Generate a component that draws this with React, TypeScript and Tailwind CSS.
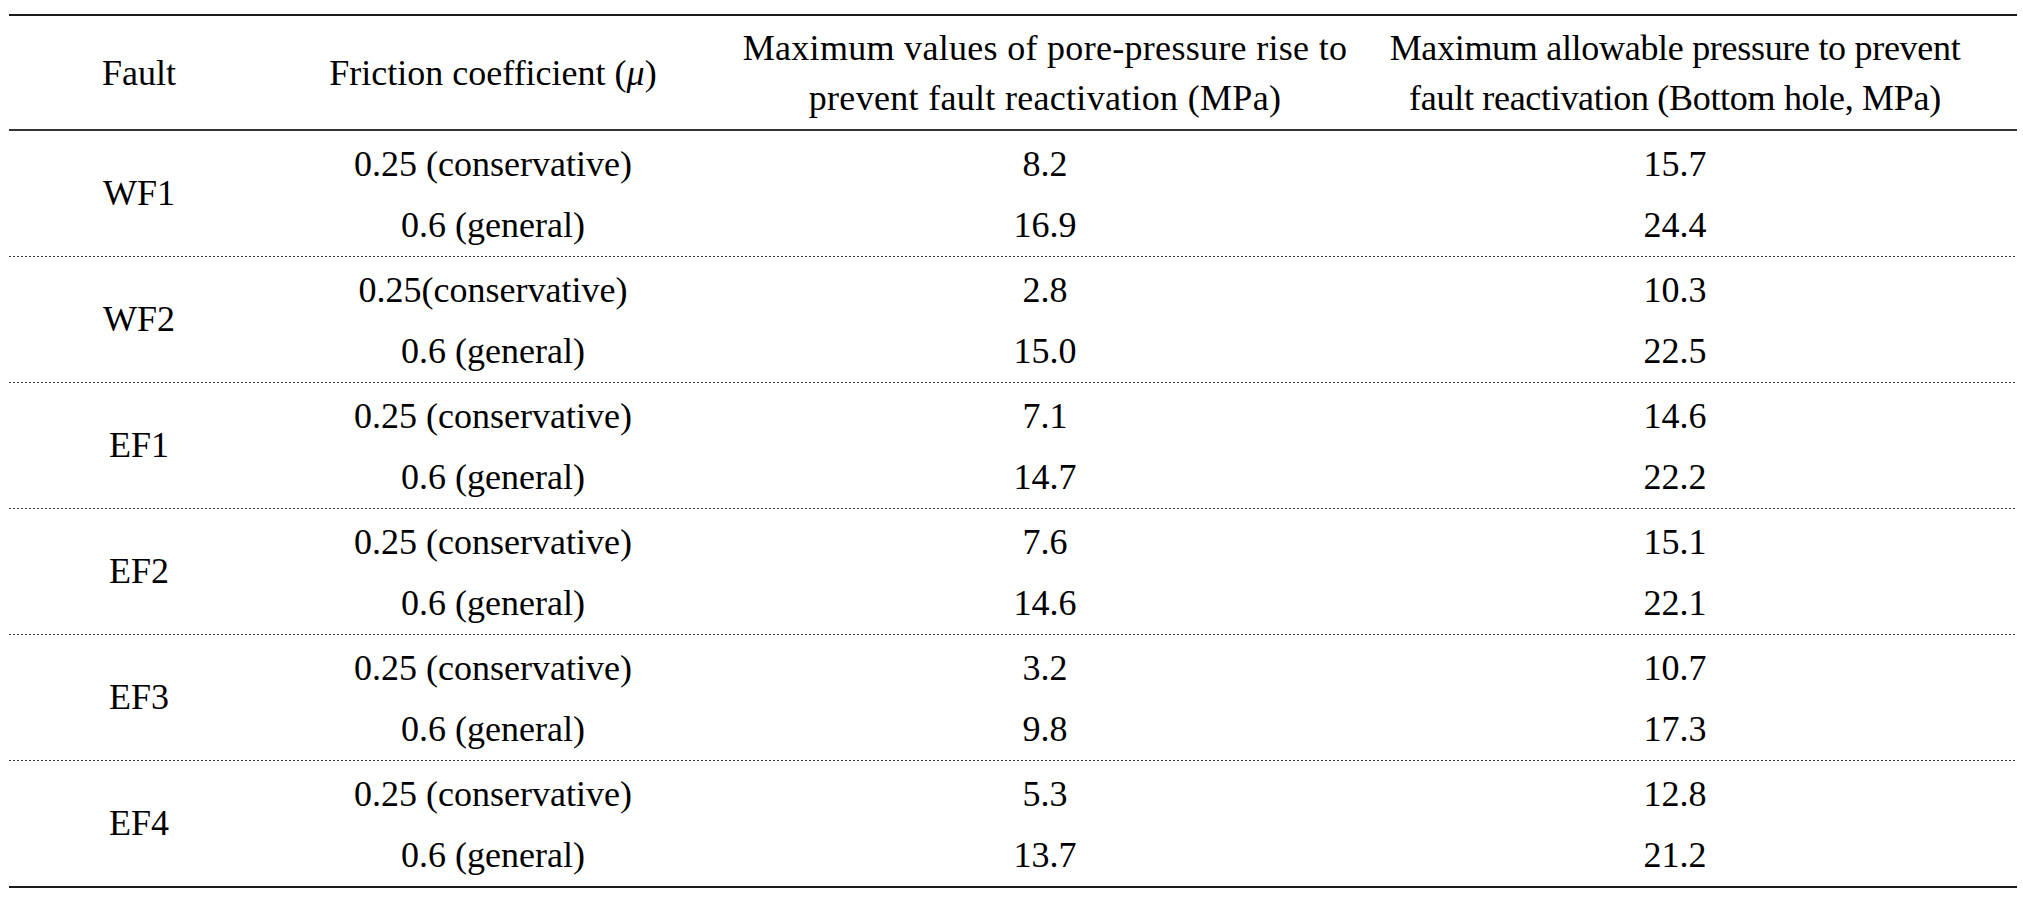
const rows = [
  { fault: 'WF1', low: ['0.25 (conservative)', '8.2', '15.7'], high: ['0.6 (general)', '16.9', '24.4'] },
  { fault: 'WF2', low: ['0.25(conservative)', '2.8', '10.3'], high: ['0.6 (general)', '15.0', '22.5'] },
  { fault: 'EF1', low: ['0.25 (conservative)', '7.1', '14.6'], high: ['0.6 (general)', '14.7', '22.2'] },
  { fault: 'EF2', low: ['0.25 (conservative)', '7.6', '15.1'], high: ['0.6 (general)', '14.6', '22.1'] },
  { fault: 'EF3', low: ['0.25 (conservative)', '3.2', '10.7'], high: ['0.6 (general)', '9.8', '17.3'] },
  { fault: 'EF4', low: ['0.25 (conservative)', '5.3', '12.8'], high: ['0.6 (general)', '13.7', '21.2'] },
];

const cols = 'grid grid-cols-[260px_448px_656px_1fr] pr-[40px]';

const App = () => {
  return (
    <div className="w-full bg-white pt-[14px] font-[Liberation_Serif,Times_New_Roman,serif] text-[36px] text-black">
      <div className="ml-[9px] w-[2008px] border-t-2 border-b-2 border-[#1a1a1a]">
        <div className={`${cols} h-[115px] items-center border-b-2 border-[#333] text-center leading-[50px]`}>
          <div>Fault</div>
          <div>
            Friction coefficient (<span className="italic">μ</span>)
          </div>
          <div className="whitespace-nowrap tracking-[0.3px]">
            Maximum values of pore-pressure rise to
            <br />
            prevent fault reactivation (MPa)
          </div>
          <div className="whitespace-nowrap tracking-[-0.3px]">
            Maximum allowable pressure to prevent
            <br />
            fault reactivation (Bottom hole, MPa)
          </div>
        </div>
        {rows.map((row, idx) => (
          <div key={row.fault}>
            <div className={`${cols} grid-rows-[63px_62px] text-center leading-[63px]`}>
              <div className="row-span-2 flex items-center justify-center">{row.fault}</div>
              {row.low.map((v, i) => (
                <div key={`l${i}`} className="pt-[2px] whitespace-nowrap">
                  {v}
                </div>
              ))}
              {row.high.map((v, i) => (
                <div key={`h${i}`} className="whitespace-nowrap">
                  {v}
                </div>
              ))}
            </div>
            {idx !== rows.length - 1 ? (
              <div className="h-px bg-[repeating-linear-gradient(to_right,#3a3a3a_0_2px,transparent_2px_4px)]" />
            ) : null}
          </div>
        ))}
      </div>
    </div>
  );
};

export default App;
